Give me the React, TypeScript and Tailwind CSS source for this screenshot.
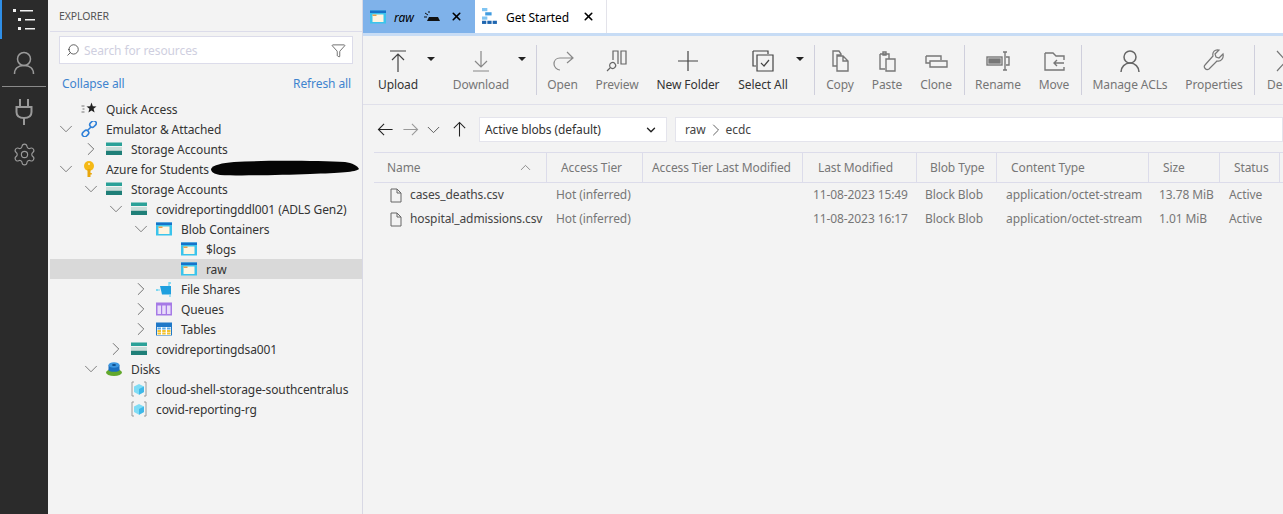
import type { ReactNode } from "react";
import { ChevronDown, ChevronRight, Search, Filter, Settings, X } from "lucide-react";

const Line = ({ children, size = 24, color = "#444", w = 1.2 }: { children: ReactNode; size?: number; color?: string; w?: number }) => (
  <svg width={size} height={size} viewBox="0 0 24 24" fill="none" stroke={color} strokeWidth={w}>
    {children}
  </svg>
);

const StorageIcon = () => (
  <svg width="16" height="16" viewBox="0 0 16 16">
    <rect x="0" y="1.5" width="16" height="3.5" fill="#2aa198" />
    <rect x="0" y="6" width="16" height="3" fill="#c9ddd9" />
    <rect x="0" y="10" width="16" height="4" fill="#1f7f78" />
    <rect x="0" y="9" width="16" height="1" fill="#a8c8c4" />
  </svg>
);

const ContainerIcon = () => (
  <svg width="16" height="16" viewBox="0 0 16 16">
    <rect x="0" y="1.5" width="16" height="13" fill="#3bc4ec" />
    <rect x="0" y="1.5" width="16" height="2.5" fill="#1673c9" />
    <rect x="2.5" y="5.5" width="11" height="7.5" fill="#fff4df" />
    <rect x="2.5" y="5.5" width="4" height="1.5" fill="#e6a24a" />
  </svg>
);

const ShareIcon = () => (
  <svg width="16" height="16" viewBox="0 0 16 16">
    <path d="M4 5h11v8.5H6z" fill="#1e9fdf" />
    <path d="M0 9h4M13 1v4M14 14v2" stroke="#6bd3f2" strokeWidth="1.2" />
    <circle cx="1" cy="9" r="1" fill="#6bd3f2" />
    <circle cx="14" cy="2" r="1" fill="#6bd3f2" />
  </svg>
);

const QueueIcon = () => (
  <svg width="16" height="16" viewBox="0 0 16 16">
    <rect x="0" y="1.5" width="16" height="13" fill="#a67ae6" />
    <rect x="1.5" y="4.5" width="3.5" height="8.5" fill="#e8dcfa" />
    <rect x="6.2" y="4.5" width="3.5" height="8.5" fill="#e8dcfa" />
    <rect x="11" y="4.5" width="3.5" height="8.5" fill="#e8dcfa" />
  </svg>
);

const TableIcon = () => (
  <svg width="16" height="16" viewBox="0 0 16 16">
    <rect x="0" y="1.5" width="16" height="13" fill="#1f78c8" />
    <rect x="1" y="6" width="14" height="8" fill="#fff" />
    {[1.5, 6.2, 11].map((x) =>
      [6.5, 9, 11.5].map((y) => <rect key={`${x}-${y}`} x={x} y={y} width="3.5" height="2" fill={y < 7 ? "#5aa8e6" : "#f2c230"} />),
    )}
  </svg>
);

const QuickIcon = () => (
  <svg width="16" height="16" viewBox="0 0 16 16">
    <path d="M10.5 1.5l1.3 3.7 3.7.2-2.9 2.4 1 3.7-3.1-2.1-3.1 2.1 1-3.7-2.900-2.400 3.700-.2z" fill="#222" />
    <path d="M0.5 5h3M1.5 8h2M0.5 11h3" stroke="#777" strokeWidth="1" />
  </svg>
);

const LinkIcon = () => (
  <svg width="16" height="16" viewBox="0 0 16 16" fill="none" stroke="#2f80d8" strokeWidth="1.6">
    <rect x="8.5" y="0.5" width="7" height="5" rx="2.5" transform="rotate(-45 12 3)" />
    <rect x="1" y="10" width="7" height="5" rx="2.5" transform="rotate(-45 4.5 12.5)" />
    <path d="M6 10l4-4" />
  </svg>
);

const KeyIcon = () => (
  <svg width="16" height="16" viewBox="0 0 16 16">
    <circle cx="8" cy="5" r="5" fill="#f5b916" />
    <rect x="6.5" y="8" width="3" height="8" fill="#e8a60c" />
    <rect x="9" y="12" width="1.8" height="1.5" fill="#e8a60c" />
    <circle cx="8" cy="3" r="1" fill="#fff3c4" />
  </svg>
);

const DiskIcon = () => (
  <svg width="16" height="16" viewBox="0 0 16 16">
    <ellipse cx="8" cy="11.5" rx="8" ry="3.5" fill="#62a82c" />
    <rect x="2.5" y="4" width="11" height="5" fill="#1a6fc0" />
    <ellipse cx="8" cy="4" rx="5.5" ry="2.8" fill="#3a96e0" />
    <ellipse cx="8" cy="9" rx="5.5" ry="1.8" fill="#1a6fc0" />
    <ellipse cx="8" cy="4" rx="2" ry="1" fill="#0f4c8a" />
  </svg>
);

const GroupIcon = () => (
  <svg width="16" height="16" viewBox="0 0 16 16">
    <path d="M3 1H1v14h2M13 1h2v14h-2" fill="none" stroke="#9a9a9a" strokeWidth="1" />
    <path d="M8 3l5 2.5v5.5l-5 2.7-5-2.7V5.500z" fill="#7fdcf5" />
    <path d="M8 8l5-2.5v5.5l-5 2.7z" fill="#3fb8e8" />
  </svg>
);

type TreeRow = { level: number; label: string; icon?: ReactNode; open?: boolean; closed?: boolean; selected?: boolean };

const tree: TreeRow[] = [
  { level: 0, label: "Quick Access", icon: <QuickIcon /> },
  { level: 0, label: "Emulator & Attached", icon: <LinkIcon />, open: true },
  { level: 1, label: "Storage Accounts", icon: <StorageIcon />, closed: true },
  { level: 0, label: "Azure for Students", icon: <KeyIcon />, open: true },
  { level: 1, label: "Storage Accounts", icon: <StorageIcon />, open: true },
  { level: 2, label: "covidreportingddl001 (ADLS Gen2)", icon: <StorageIcon />, open: true },
  { level: 3, label: "Blob Containers", icon: <ContainerIcon />, open: true },
  { level: 4, label: "$logs", icon: <ContainerIcon /> },
  { level: 4, label: "raw", icon: <ContainerIcon />, selected: true },
  { level: 3, label: "File Shares", icon: <ShareIcon />, closed: true },
  { level: 3, label: "Queues", icon: <QueueIcon />, closed: true },
  { level: 3, label: "Tables", icon: <TableIcon />, closed: true },
  { level: 2, label: "covidreportingdsa001", icon: <StorageIcon />, closed: true },
  { level: 1, label: "Disks", icon: <DiskIcon />, open: true },
  { level: 2, label: "cloud-shell-storage-southcentralus", icon: <GroupIcon /> },
  { level: 2, label: "covid-reporting-rg", icon: <GroupIcon /> },
];

const ActivityBar = () => (
  <div className="flex w-12 shrink-0 flex-col bg-[#2b2b2b]">
    <div className="flex h-[39px] items-center justify-center border-l-2 border-[#2f8fe8] pr-0.5">
      <svg width="24" height="22" viewBox="0 0 24 22" fill="#f2f2f2">
        <rect x="1" y="0" width="3" height="3" />
        <rect x="8" y="1" width="13" height="1.5" />
        <rect x="6" y="9" width="3" height="3" />
        <rect x="13" y="10" width="10" height="1.5" />
        <rect x="6" y="18" width="3" height="3" />
        <rect x="13" y="19" width="10" height="1.5" />
      </svg>
    </div>
    <div className="flex h-[47px] items-center justify-center">
      <svg width="22" height="24" viewBox="0 0 22 24" fill="none" stroke="#9a9a9a" strokeWidth="1.5">
        <circle cx="11" cy="8" r="6.5" />
        <path d="M1.5 23c0-5.500 4-8.500 9.500-8.500s9.500 3 9.500 8.500" />
      </svg>
    </div>
    <div className="mx-0.5 h-px bg-[#8a8a8a]" />
    <div className="flex h-[50px] items-center justify-center">
      <svg width="18" height="28" viewBox="0 0 18 28" fill="none" stroke="#9a9a9a" strokeWidth="2">
        <path d="M5 1v8M13 1v8M1.5 9h15v5c0 4-3 6-7.500 6s-7.500-2-7.500-6z" />
        <path d="M9 20v7" />
      </svg>
    </div>
    <div className="flex h-[35px] items-center justify-center">
      <Settings size={25} strokeWidth={1.1} color="#9a9a9a" />
    </div>
  </div>
);

const Sidebar = () => (
  <div className="flex w-[315px] shrink-0 flex-col border-r border-[#d8d8e4] bg-[#f3f3f3] pl-0.5 text-[#333]">
    <div className="ml-[9px] flex h-[31px] items-center pt-0.5 text-[10.5px] text-[#555]">EXPLORER</div>
    <div className="h-px bg-[#dcdcea]" />
    <div className="mx-[9px] mt-1 flex h-[28px] items-center border border-[#dcdcea] bg-white px-1.5">
      <Search size={14} strokeWidth={1.3} color="#333" className="-scale-x-100" />
      <span className="ml-1 flex-1 pt-0.5 text-[#cfcfe0]">Search for resources</span>
      <Filter size={15} strokeWidth={1.1} color="#333" />
    </div>
    <div className="flex h-[35px] items-center justify-between pl-3 pr-[11px] pt-1 text-[#3f84cf]">
      <span>Collapse all</span>
      <span>Refresh all</span>
    </div>
    {tree.map((row, i) => (
      <div
        key={i}
        className={`relative flex h-5 items-center ${row.selected ? "bg-[#d9d9d9]" : ""}`}
        style={{ paddingLeft: 6 + row.level * 25 }}
      >
        <span className="flex w-5 justify-center">
          {row.open && <ChevronDown size={22} strokeWidth={0.8} color="#555" className="shrink-0" />}
          {row.closed && <ChevronRight size={22} strokeWidth={0.8} color="#444" className="shrink-0" />}
        </span>
        <span className="ml-[5px] mr-[9px] w-4">{row.icon}</span>
        <span className="whitespace-nowrap pt-0.5">{row.label}</span>
        {i === 3 && (
          <svg className="absolute left-[160px] top-[1px]" width="151" height="18" viewBox="0 0 151 18">
            <path d="M1 9C3 5 12 3 24 2C60 0 110 1 135 2C142 3 148 6 149 9C146 12 130 13 100 14C70 15 30 16 10 15C4 14 1 12 1 9z" fill="#050505" />
          </svg>
        )}
      </div>
    ))}
  </div>
);

const Tabs = () => (
  <div className="flex h-[33px] bg-white">
    <div className="flex w-[112px] items-center bg-[#7fb2ea] pl-[7px] text-black">
      <ContainerIcon />
      <span className="ml-[8px] pt-0.5 italic">raw</span>
      <svg className="ml-[10px]" width="16" height="14" viewBox="0 0 16 14">
        <path d="M5 7h9l2 4H3z" fill="#111" />
        <path d="M1 3l3 2M5 1v2M0 7h3" stroke="#111" strokeWidth="1" />
      </svg>
      <X size={13} strokeWidth={3} className="ml-[10px]" />
    </div>
    <div className="ml-px flex w-[131px] items-center border-r border-[#e3e3ea] pl-[6px] text-black">
      <svg width="16" height="17" viewBox="0 0 15 16">
        <rect x="0" y="0" width="5" height="3" fill="#7fc4f2" />
        <rect x="3" y="4" width="6" height="3" fill="#3f9be0" />
        <rect x="0" y="8" width="5" height="3" fill="#7fc4f2" />
        <rect x="0" y="12" width="4" height="3" fill="#1f66b0" />
        <rect x="5" y="12" width="4" height="3" fill="#1f66b0" />
        <rect x="10" y="12" width="4" height="3" fill="#1f66b0" />
      </svg>
      <span className="ml-[8px] pt-0.5">Get Started</span>
      <X size={13} strokeWidth={3} className="ml-[13px]" />
    </div>
  </div>
);

const Caret = ({ className = "" }: { className?: string }) => (
  <span className={`mb-[22px] h-0 w-0 shrink-0 border-x-4 border-t-[4px] border-x-transparent border-t-[#222] ${className}`} />
);

const Sep = ({ className = "" }: { className?: string }) => <span className={`h-[50px] w-px shrink-0 bg-[#cfcfdc] ${className}`} />;

const ToolBtn = ({ label, icon, width, dark }: { label: string; icon: ReactNode; width: string; dark?: boolean }) => (
  <div className={`flex shrink-0 flex-col items-center ${width} ${dark ? "text-[#333]" : "text-[#767676]"}`}>
    <span className="mt-px flex h-6 items-center">{icon}</span>
    <span className="mt-[4px] whitespace-nowrap leading-4">{label}</span>
  </div>
);

const Toolbar = () => (
  <div className="flex h-[69px] items-center border-b border-[#e0e0ea] pl-2">
    <ToolBtn label="Upload" dark width="w-[54px]" icon={<Line><path d="M4 2h16M12 5v18M6 11l6-6 6 6" /></Line>} />
    <Caret className="ml-[2px]" />
    <ToolBtn label="Download" width="w-[66px] ml-[13px]" icon={<Line color="#888"><path d="M12 2v16M6 12l6 6 6-6M4 22h16" /></Line>} />
    <Caret className="ml-[4px]" />
    <Sep className="ml-[10px]" />
    <ToolBtn label="Open" width="w-[51px]" icon={<Line color="#888"><path d="M21 9H9c-4 0-6 3-6 6s3 6 6 6M16 3l6 6-6 5" /></Line>} />
    <ToolBtn label="Preview" width="w-[58px]" icon={<Line color="#666"><path d="M8 11V2h5v13M16 2h5v13h-5zM6 14a3 3 0 1 1 0 5 3 3 0 0 1 0-5zM5 19l-3 3" /></Line>} />
    <ToolBtn label="New Folder" dark width="w-[84px]" icon={<Line><path d="M12 2v20M2 12h20" /></Line>} />
    <ToolBtn label="Select All" dark width="w-[66px]" icon={<Line color="#444"><path d="M2 2h15v3M2 2v15h3M6 6h16v16H6zM10 14l3 3 5-6" /></Line>} />
    <Caret />
    <Sep className="ml-[10px]" />
    <ToolBtn label="Copy" width="w-[50px]" icon={<Line color="#777" w={1.4}><path d="M5 2h6l2 3v1H9v11H5zM9 7h6l5 5v10H9zM15 7v5h5" /></Line>} />
    <ToolBtn label="Paste" width="w-[44px]" icon={<Line color="#777" w={1.4}><path d="M5 5h9v5M5 5v15h5M8 3h3v3H8zM11 10h9v12h-9z" /></Line>} />
    <ToolBtn label="Clone" width="w-[54px]" icon={<Line color="#777" w={1.4}><path d="M2 7h15v4M2 7v7h4M6 12h17v6H6z" /></Line>} />
    <Sep className="ml-px" />
    <ToolBtn label="Rename" width="w-[66px]" icon={<Line color="#777" w={1.4}><rect x="1" y="8" width="15" height="8" /><rect x="3" y="10" width="11" height="4" fill="#777" /><path d="M17 3h4M19 3v18M17 21h4M20 8h3v8h-3" /></Line>} />
    <ToolBtn label="Move" width="w-[46px]" icon={<Line color="#777" w={1.4}><path d="M3 4h8l3 3h8v4M3 4v17h19v-3M22 14H12M15 11l-3 3 3 3" /></Line>} />
    <Sep className="ml-[4px]" />
    <ToolBtn label="Manage ACLs" width="w-[96px]" icon={<Line color="#666" w={1.5}><circle cx="12" cy="8" r="6" /><path d="M3 23c0-5 4-9 9-9s9 4 9 9" /></Line>} />
    <ToolBtn label="Properties" width="w-[72px]" icon={<Line color="#777"><path d="M21 5l-4 4-3-1-1-3 4-4c-4-1-7 2-6 6L3 16c-2 2 1 6 4 4l8-8c4 1 7-3 6-7z" /></Line>} />
    <Sep className="ml-[4px]" />
    <ToolBtn label="Delete" width="w-[44px] ml-[8px]" icon={<Line color="#777"><path d="M4 2l18 20M22 2L4 22" /></Line>} />
  </div>
);

const NavBar = () => (
  <div className="mt-[12px] flex h-[25px] items-center pl-[14px]">
    <span className="w-[25px]"><Line size={17} color="#222" w={1.5}><path d="M22 12H2M10 4l-8 8 8 8" /></Line></span>
    <span className="w-[24px]"><Line size={17} color="#999" w={1.5}><path d="M2 12h20M14 4l8 8-8 8" /></Line></span>
    <span className="w-[25px]"><Line size={15} color="#555" w={1.5}><path d="M3 8l9 9 9-9" /></Line></span>
    <span className="w-[18px]"><Line size={17} color="#222" w={1.5}><path d="M12 22V2M4 10l8-8 8 8" /></Line></span>
    <div className="ml-[10px] flex h-[25px] w-[188px] items-center justify-between border border-[#e4e4ec] bg-white pl-[5px] pr-2 text-[#333]">
      <span>Active blobs (default)</span>
      <ChevronDown size={14} strokeWidth={2.4} color="#222" />
    </div>
    <div className="ml-2 flex h-[25px] flex-1 items-center border border-[#e4e4ec] bg-white pl-[9px] text-[#444]">
      raw
      <ChevronRight size={20} strokeWidth={1} color="#444" />
      ecdc
    </div>
  </div>
);

const columns = [
  { name: "Name", pad: "pl-[13px]" },
  { name: "Access Tier", pad: "pl-[14px]" },
  { name: "Access Tier Last Modified", pad: "pl-[9px]" },
  { name: "Last Modified", pad: "pl-[15px]" },
  { name: "Blob Type", pad: "pl-[13px]" },
  { name: "Content Type", pad: "pl-[14px]" },
  { name: "Size", pad: "pl-[14px]" },
  { name: "Status", pad: "pl-[14px]" },
];

const blobs = [
  ["cases_deaths.csv", "Hot (inferred)", "", "11-08-2023 15:49", "Block Blob", "application/octet-stream", "13.78 MiB", "Active"],
  ["hospital_admissions.csv", "Hot (inferred)", "", "11-08-2023 16:17", "Block Blob", "application/octet-stream", "1.01 MiB", "Active"],
];

const cellPads = ["pl-[36px]", "pl-[9px]", "pl-[9px]", "pl-[10px]", "pl-[8px]", "pl-[9px]", "pl-[10px]", "pl-[9px]"];

const BlobTable = () => (
  <div className="ml-[11px] mt-[10px]">
    <div className="grid h-[31px] grid-cols-[173px_96px_160px_114px_80px_152px_71px_60px] border-y border-[#dcdcea] text-[#777]">
      {columns.map((c, i) => (
        <div key={c.name} className={`relative flex items-center whitespace-nowrap border-r border-[#dcdcea] ${c.pad}`}>
          {c.name}
          {i === 0 && <ChevronDown size={17} strokeWidth={1} color="#666" className="absolute right-[12px] rotate-180" />}
        </div>
      ))}
    </div>
    {blobs.map((row, r) => (
      <div key={r} className="grid h-6 grid-cols-[173px_96px_160px_114px_80px_152px_71px_60px] text-[#777]">
        {row.map((text, i) => (
          <div key={i} className={`relative flex items-center whitespace-nowrap ${cellPads[i]} ${i === 0 ? "text-[#444]" : ""}`}>
            {i === 0 && (
              <svg className="absolute left-[16px]" width="12" height="15" viewBox="0 0 12 15" fill="none" stroke="#666" strokeWidth="1">
                <path d="M1 1h6l4 4v9H1zM7 1v4h4" />
              </svg>
            )}
            {text}
          </div>
        ))}
      </div>
    ))}
  </div>
);

export default function App() {
  return (
    <div className="flex h-[514px] w-[1283px] overflow-hidden bg-[#f3f3f3] font-['Noto_Sans',sans-serif] text-[12px] tracking-[-0.1px]">
      <ActivityBar />
      <Sidebar />
      <div className="flex min-w-0 flex-1 flex-col overflow-hidden">
        <Tabs />
        <div className="h-[3px] bg-[#c7dcf5]" />
        <Toolbar />
        <NavBar />
        <BlobTable />
      </div>
    </div>
  );
}
